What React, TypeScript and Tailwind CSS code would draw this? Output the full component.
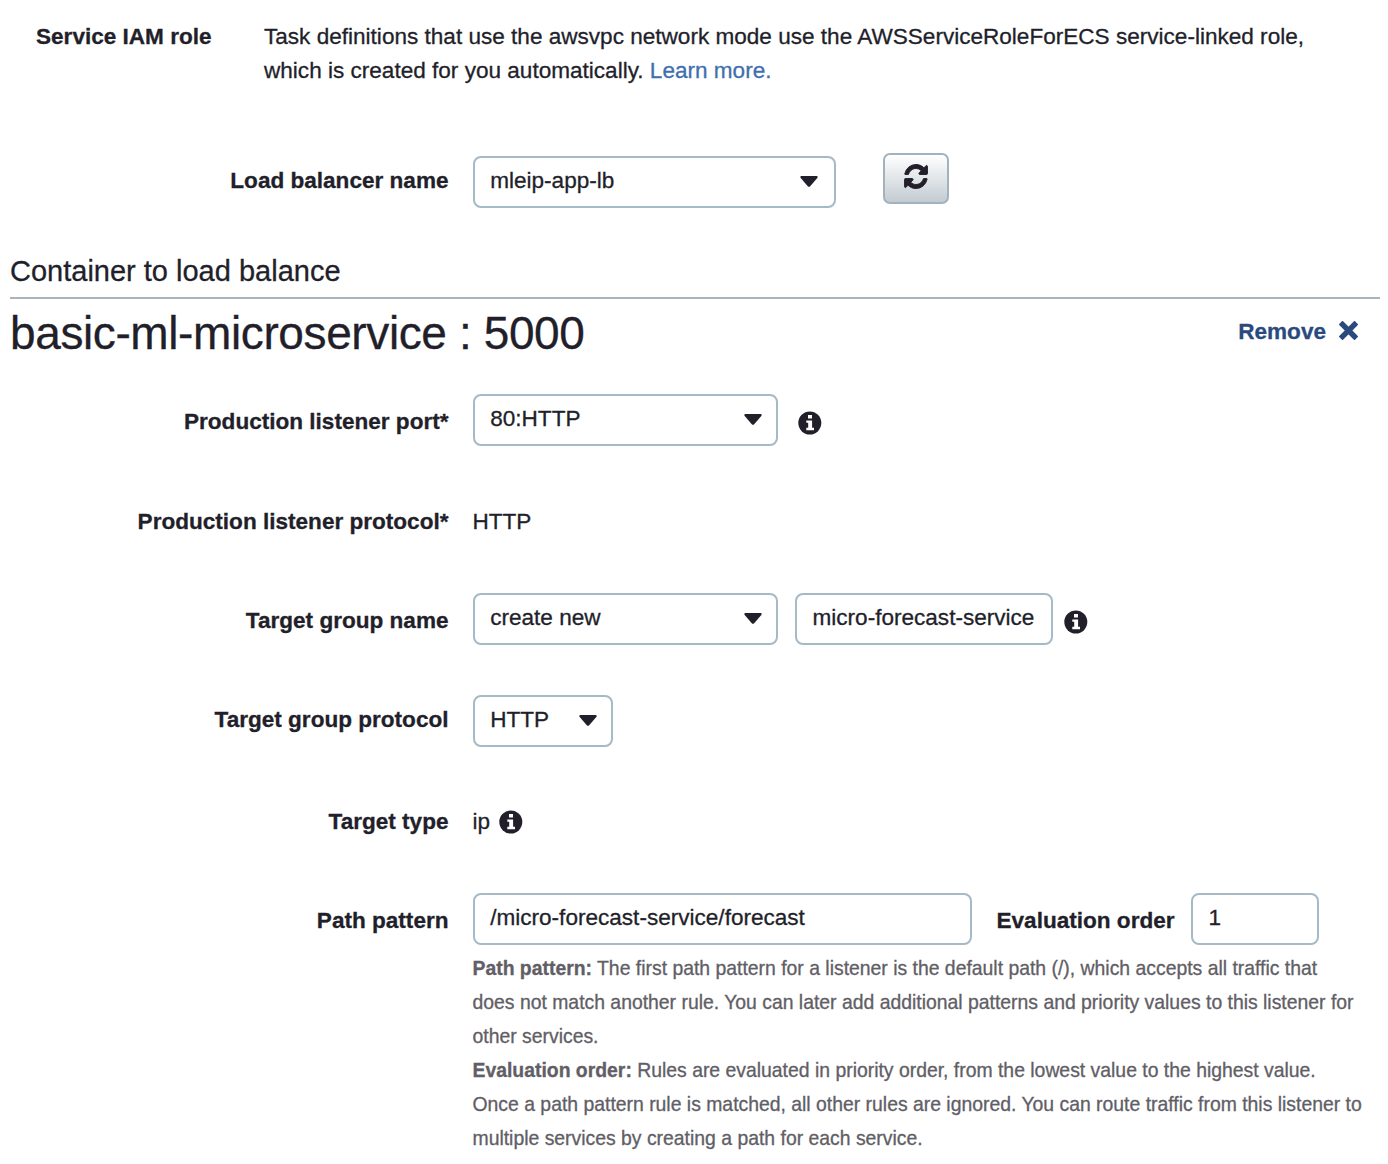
import type { ReactNode } from "react";

const FIELD = "h-[51.500px] rounded-[8px] border-2 border-[#a5b9c6] bg-white text-[#221f2b]";

function Caret() {
  return (
    <svg className="mt-[18px] shrink-0" width="18" height="11" viewBox="0 0 18 11" fill="#221f2b">
      <path d="M1 0h16q1.2 0.6 0.3 1.9L10.2 10.2q-1.2 1-2.4 0L0.7 1.9Q-0.2 0.6 1 0z" />
    </svg>
  );
}

function Select({ value, className }: { value: string; className: string }) {
  return (
    <button type="button" className={`${FIELD} flex items-start justify-between pl-[15.700px] ${className}`}>
      <span className="leading-[46px]">{value}</span>
      <Caret />
    </button>
  );
}

function Info() {
  return (
    <svg className="block shrink-0" width="24" height="24" viewBox="0 0 24 24">
      <circle cx="11.8" cy="12" r="11.5" fill="#221f2b" />
      <path fill="#fff" d="M10 4h4v3.4h-4zM8.3 9.4h5.8v7.4H16v2.4H8.3v-2.4h1.9v-5H8.3z" />
    </svg>
  );
}

function Row({
  label,
  className,
  labelClass = "pt-[11px]",
  children,
}: {
  label: string;
  className: string;
  labelClass?: string;
  children: ReactNode;
}) {
  return (
    <div className={`flex items-start ${className}`}>
      <div className={`mr-6 w-[448.500px] shrink-0 text-right font-bold leading-[34px] ${labelClass}`}>{label}</div>
      {children}
    </div>
  );
}

export default function App() {
  return (
    <main className="h-[1164px] w-[1388px] overflow-hidden bg-white pt-5 font-['Liberation_Sans',Arial,sans-serif] text-[22.570px] text-[#221f2b] [-webkit-text-stroke:0.3px]">
      <div className="flex h-[136px] pl-9 leading-[34px]">
        <div className="w-[228px] shrink-0 font-bold">Service IAM role</div>
        <div className="whitespace-nowrap">
          Task definitions that use the awsvpc network mode use the AWSServiceRoleForECS service-linked role,
          <br />
          which is created for you automatically. <a className="text-[#3f6fae]">Learn more.</a>
        </div>
      </div>

      <Row label="Load balancer name" className="h-[98px]" labelClass="pt-[8px]">
        <Select value="mleip-app-lb" className="w-[363.500px] pr-[16px]" />
        <button
          type="button"
          className="-mt-[3px] ml-[46.500px] flex h-[51px] w-[66px] items-start justify-center rounded-[7px] border-2 border-[#a3b2bf] bg-linear-to-b from-white to-[#c3ccd2] pt-[9px]"
        >
          <svg width="24" height="25" viewBox="-30 -30 1596 1596" preserveAspectRatio="none" fill="#221f2b" stroke="#221f2b" strokeWidth="60">
            <path d="M1511 928q0 5-1 7-64 268-268 434.500T764 1536q-146 0-282.500-55T238 1324l-129 129q-19 19-45 19t-45-19-19-45V960q0-26 19-45t45-19h448q26 0 45 19t19 45-19 45l-137 137q71 66 161 102t187 36q134 0 250-65t186-179q11-17 53-117 8-23 30-23h192q13 0 22.500 9.500t9.500 22.500zm25-800v448q0 26-19 45t-45 19h-448q-26 0-45-19t-19-45 19-45l138-138Q969 256 768 256q-134 0-250 65T332 500q-11 17-53 117-8 23-30 23H50q-13 0-22.500-9.500T18 608v-7q65-268 270-434.500T768 0q146 0 284 55.500T1297 212l130-129q19-19 45-19t45 19 19 45z" />
          </svg>
        </button>
      </Row>

      <h3 className="ml-[10px] h-[45px] w-[1370px] border-b-2 border-[#a9b5bc] text-[29px] leading-[34px]">Container to load balance</h3>
      <div className="ml-[10px] flex h-[95px] w-[1370px] justify-between">
        <h1 className="text-[46px] leading-[69px] tracking-[-0.390px]">basic-ml-microservice : 5000</h1>
        <a className="mr-[22px] flex h-[65px] items-center font-bold text-[#2a4a7e]">
          Remove
          <svg className="-mt-[2px] ml-[13px]" width="19" height="19" viewBox="0 0 19 19">
            <path d="M3.500 3.500L15.500 15.500M15.500 3.500L3.500 15.500" stroke="#2a4a7e" strokeWidth="5.400" strokeLinecap="square" />
          </svg>
        </a>
      </div>

      <Row label="Production listener port*" className="h-[99px]">
        <Select value="80:HTTP" className="w-[305.500px] pr-[14px]" />
        <div className="ml-[19.500px] mt-[17px]"><Info /></div>
      </Row>
      <Row label="Production listener protocol*" className="h-[100px]" labelClass="pt-[12px]">
        <span className="pt-[12px] leading-[34px]">HTTP</span>
      </Row>
      <Row label="Target group name" className="h-[102px]">
        <Select value="create new" className="w-[305.500px] pr-[14px]" />
        <div className={`${FIELD} ml-[16.500px] w-[258.500px] pl-4 leading-[46px]`}>micro-forecast-service</div>
        <div className="ml-[10.500px] mt-[17px]"><Info /></div>
      </Row>
      <Row label="Target group protocol" className="h-[99px]" labelClass="pt-[8px]">
        <Select value="HTTP" className="w-[140.500px] pr-[14px]" />
      </Row>
      <Row label="Target type" className="h-[99px]">
        <span className="pt-[11px] leading-[34px]">ip</span>
        <div className="ml-[9px] mt-[16px]"><Info /></div>
      </Row>
      <Row label="Path pattern" className="h-[58px]">
        <div className={`${FIELD} w-[499.500px] pl-[15.700px] leading-[46px]`}>/micro-forecast-service/forecast</div>
        <div className="ml-[24.500px] w-[194px] pt-[11px] font-bold leading-[34px]">Evaluation order</div>
        <div className={`${FIELD} w-[128.500px] pl-4 leading-[46px]`}>1</div>
      </Row>
      <p className="ml-[472.500px] whitespace-nowrap text-[19.390px] leading-[34px] text-[#615e66]">
        <b>Path pattern:</b> The first path pattern for a listener is the default path (/), which accepts all traffic that
        <br />
        does not match another rule. You can later add additional patterns and priority values to this listener for
        <br />
        other services.
        <br />
        <b>Evaluation order:</b> Rules are evaluated in priority order, from the lowest value to the highest value.
        <br />
        Once a path pattern rule is matched, all other rules are ignored. You can route traffic from this listener to
        <br />
        multiple services by creating a path for each service.
      </p>
    </main>
  );
}
